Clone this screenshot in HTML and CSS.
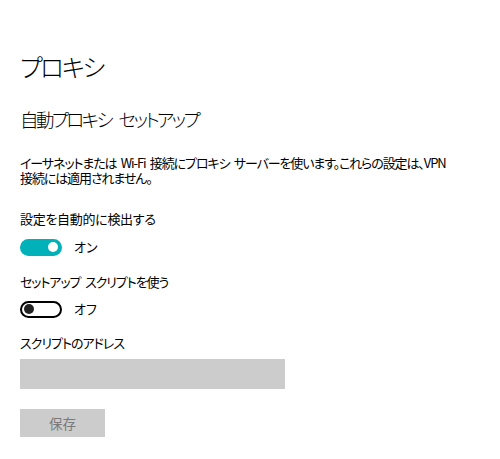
FILE: index.html
```html
<!DOCTYPE html>
<html lang="ja">
<head>
<meta charset="utf-8">
<link rel="stylesheet" href="styles.css">
</head>
<body>
<main class="page">
  <h1 class="title">プロキシ</h1>
  <h2 class="section">自動プロキシ セットアップ</h2>
  <p class="desc">イーサネットまたは Wi-Fi 接続にプロキシ サーバーを使います。これらの設定は、VPN 接続には適用されません。</p>

  <div class="label label-first">設定を自動的に検出する</div>
  <div class="toggle-row row-first">
    <span class="toggle on"><span class="knob"></span></span>
    <span class="state">オン</span>
  </div>

  <div class="label label-second">セットアップ スクリプトを使う</div>
  <div class="toggle-row row-second">
    <span class="toggle off"><span class="knob"></span></span>
    <span class="state">オフ</span>
  </div>

  <div class="label label-third">スクリプトのアドレス</div>
  <div class="input"></div>

  <button class="save" disabled>保存</button>
</main>
</body>
</html>
```
FILE: styles.css
```css
html, body {
  margin: 0;
  padding: 0;
  background: #ffffff;
}
body {
  font-family: "Noto Sans CJK JP", "Noto Sans", sans-serif;
  font-feature-settings: "palt";
  color: #000000;
}
.page {
  padding: 47px 20px 0 20px;
  display: flex;
  flex-direction: column;
  align-items: flex-start;
}
.title {
  margin: 0;
  font-size: 24.5px;
  font-weight: 300;
  line-height: 40px;
  letter-spacing: -2.3px;
}
.section {
  margin: 18px 0 0 0;
  font-size: 18.5px;
  font-weight: 300;
  line-height: 28px;
  letter-spacing: -2.6px;
  word-spacing: 6px;
}
.desc {
  margin: 22px 0 0 0;
  font-size: 13px;
  line-height: 15px;
  letter-spacing: -1.1px;
  word-spacing: 2.5px;
  max-width: 435px;
}
.label {
  font-size: 13px;
  line-height: 20px;
  letter-spacing: -0.3px;
}
.label-first {
  margin-top: 24px;
}
.label-second {
  margin-top: 15px;
  letter-spacing: -1.1px;
  word-spacing: 3px;
}
.label-third {
  margin-top: 14px;
  letter-spacing: -1px;
}
.toggle-row {
  display: flex;
  align-items: center;
  gap: 12px;
  height: 20px;
}
.row-first {
  margin-top: 8px;
}
.row-second {
  margin-top: 7px;
}
.toggle {
  box-sizing: border-box;
  width: 42px;
  height: 17px;
  border-radius: 9px;
  display: flex;
  align-items: center;
}
.toggle .knob {
  width: 10px;
  height: 10px;
  border-radius: 50%;
}
.toggle.on {
  background: #00b1ba;
  justify-content: flex-end;
  padding-right: 4px;
}
.toggle.on .knob {
  background: #ffffff;
}
.toggle.off {
  border: 2px solid #000000;
  justify-content: flex-start;
  padding-left: 2px;
}
.toggle.off .knob {
  background: #222222;
}
.state {
  font-size: 13px;
  line-height: 20px;
}
.input {
  margin-top: 6px;
  width: 265px;
  height: 30px;
  background: #cccccc;
}
.save {
  margin-top: 20px;
  width: 85px;
  height: 28px;
  border: none;
  background: #cccccc;
  color: #7a7a7a;
  font-family: "Noto Sans CJK JP", sans-serif;
  font-size: 13.5px;
  padding: 0;
}
```
